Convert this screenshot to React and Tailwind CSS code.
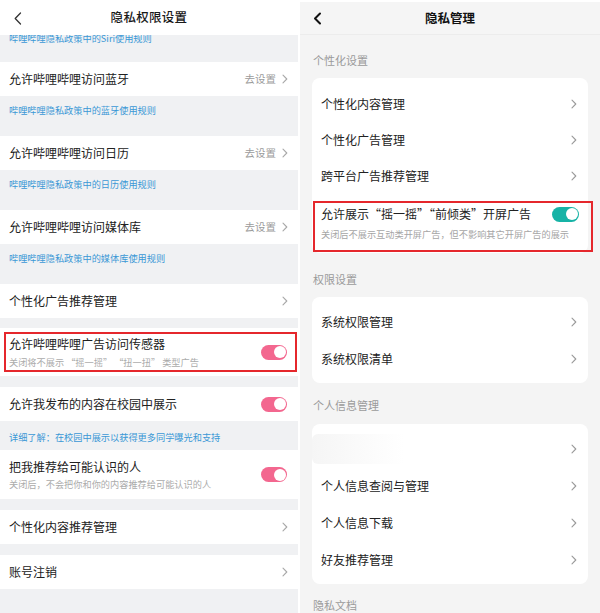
import React from "react";

const Chev = ({ cls = "text-[#a8a8a8]" }) => (
  <svg width="6" height="10" viewBox="0 0 6 10" className={cls}>
    <path d="M1 1.2L4.8 5L1 8.8" fill="none" stroke="currentColor" strokeWidth="1.1" strokeLinecap="round" strokeLinejoin="round" />
  </svg>
);

const PinkToggle = () => (
  <div className="w-[26px] h-[15px] rounded-full bg-[#f3678f] flex items-center justify-end pr-[1.5px] shrink-0">
    <div className="w-[12px] h-[12px] rounded-full bg-white" />
  </div>
);

const TealToggle = () => (
  <div className="w-[27px] h-[15px] rounded-full bg-[#17b3a6] flex items-center justify-end pr-[1.5px] shrink-0">
    <div className="w-[12px] h-[12px] rounded-full bg-white" />
  </div>
);

const LRow = ({ title, right }) => (
  <div className="h-[34px] shrink-0 bg-white flex items-center justify-between pl-[9px] pr-[10px]">
    <span className="text-[12px] leading-[14px] text-[#212121]">{title}</span>
    <div className="flex items-center gap-[6px]">
      {right && <span className="text-[10.5px] text-[#9b9b9b]">{right}</span>}
      <Chev />
    </div>
  </div>
);

const Blue = ({ children, h = "h-[40px]", pt = "pt-[8px]" }) => (
  <div className={`${h} ${pt} pl-[9px] shrink-0`}>
    <p className="text-[9.2px] leading-[12px] text-[#3a98d6]">{children}</p>
  </div>
);

const RRow = ({ title }) => (
  <div className="h-[36px] flex items-center justify-between pl-[9px] pr-[11px]">
    <span className="text-[12px] leading-[14px] text-[#222]">{title}</span>
    <Chev cls="text-[#9a9a9a]" />
  </div>
);

const RRow37 = ({ title, blur }) => (
  <div className="h-[37px] flex items-center justify-between pl-[9px] pr-[11px]">
    {blur ? (
      <div className="w-[92px] h-[30px] -ml-[9px] bg-gradient-to-r from-[#f1f1f1] to-white rounded-l-[6px] opacity-70" />
    ) : (
      <span className="text-[12px] leading-[14px] text-[#222]">{title}</span>
    )}
    <Chev cls="text-[#9a9a9a]" />
  </div>
);

const Label = ({ children, h, pt }) => (
  <div className={`${h} ${pt} pl-[13px] shrink-0`}>
    <p className="text-[11px] leading-[12px] text-[#9a9a9a]">{children}</p>
  </div>
);

export default function App() {
  return (
    <div className="w-[600px] h-[613px] bg-white flex overflow-hidden font-['Noto_Sans_CJK_SC',sans-serif]">
      {/* Left panel */}
      <div className="w-[298px] h-full bg-[#f0f1f3] flex flex-col">
        <div className="h-[35px] shrink-0 bg-white grid grid-cols-[40px_1fr_40px] items-center">
          <div className="pl-[14px] pt-[1px]">
            <svg width="8" height="13" viewBox="0 0 8 13">
              <path d="M6.5 1L1.2 6.5L6.5 12" fill="none" stroke="#333" strokeWidth="1.3" strokeLinecap="round" strokeLinejoin="round" />
            </svg>
          </div>
          <div className="text-center text-[12.5px] font-medium text-[#1a1a1a] tracking-[0.3px]">隐私权限设置</div>
          <div />
        </div>
        <div className="h-[27px] shrink-0 overflow-hidden pl-[9px]">
          <p className="mt-[-3px] text-[9.2px] leading-[12px] text-[#3a98d6]">哔哩哔哩隐私政策中的Siri使用规则</p>
        </div>
        <LRow title="允许哔哩哔哩访问蓝牙" right="去设置" />
        <Blue>哔哩哔哩隐私政策中的蓝牙使用规则</Blue>
        <LRow title="允许哔哩哔哩访问日历" right="去设置" />
        <Blue>哔哩哔哩隐私政策中的日历使用规则</Blue>
        <LRow title="允许哔哩哔哩访问媒体库" right="去设置" />
        <Blue>哔哩哔哩隐私政策中的媒体库使用规则</Blue>
        <LRow title="个性化广告推荐管理" />
        <div className="h-[10px] shrink-0" />
        <div className="h-[48px] shrink-0 bg-white pt-[4px] pl-[4px] pr-[1px]">
          <div className="h-[40px] border-2 border-[#e5272c] flex items-center justify-between pl-[3px] pr-[8px]">
            <div className="flex flex-col">
              <span className="text-[12px] leading-[14px] text-[#212121]">允许哔哩哔哩广告访问传感器</span>
              <span className="mt-[5px] text-[9.2px] leading-[12px] text-[#ababab]">关闭将不展示 “摇一摇” “扭一扭” 类型广告</span>
            </div>
            <PinkToggle />
          </div>
        </div>
        <div className="h-[11px] shrink-0" />
        <div className="h-[34px] shrink-0 bg-white flex items-center justify-between pl-[9px] pr-[11px]">
          <span className="text-[12px] leading-[14px] text-[#212121]">允许我发布的内容在校园中展示</span>
          <PinkToggle />
        </div>
        <Blue h="h-[29px]" pt="pt-[10px]">详细了解：在校园中展示以获得更多同学曝光和支持</Blue>
        <div className="h-[49px] shrink-0 bg-white flex items-center justify-between pl-[9px] pr-[11px]">
          <div className="flex flex-col pt-[1px]">
            <span className="text-[12px] leading-[14px] text-[#212121]">把我推荐给可能认识的人</span>
            <span className="mt-[4px] text-[9.2px] leading-[12px] text-[#ababab]">关闭后，不会把你和你的内容推荐给可能认识的人</span>
          </div>
          <PinkToggle />
        </div>
        <div className="h-[11px] shrink-0" />
        <LRow title="个性化内容推荐管理" />
        <div className="h-[11px] shrink-0" />
        <LRow title="账号注销" />
      </div>

      <div className="w-[2px] h-full bg-white" />

      {/* Right panel */}
      <div className="w-[300px] h-full bg-[#f4f4f4] flex flex-col">
        <div className="h-[2px] shrink-0 bg-white" />
        <div className="h-[33px] shrink-0 bg-[#f5f5f5] border-b border-[#ececec] grid grid-cols-[40px_1fr_40px] items-center">
          <div className="pl-[13px]">
            <svg width="9" height="13" viewBox="0 0 9 13">
              <path d="M7 1.5L2 6.5L7 11.5" fill="none" stroke="#111" strokeWidth="2" strokeLinecap="round" strokeLinejoin="round" />
            </svg>
          </div>
          <div className="text-center text-[12.5px] font-bold text-[#111]">隐私管理</div>
          <div />
        </div>
        <Label h="h-[43px]" pt="pt-[19px]">个性化设置</Label>
        <div className="mx-[12px] bg-white rounded-[8px] pt-[8px] pb-[1px] shrink-0">
          <RRow title="个性化内容管理" />
          <RRow title="个性化广告管理" />
          <RRow title="跨平台广告推荐管理" />
          <div className="mt-[7px] ml-[1px] mr-[-5px] h-[51px] border-2 border-[#e5272c] pl-[6px] pr-[12px] pt-[4px]">
            <div className="flex items-center justify-between h-[14px]">
              <span className="text-[12px] leading-[14px] text-[#222]">允许展示“摇一摇”“前倾类”开屏广告</span>
              <TealToggle />
            </div>
            <p className="mt-[7px] text-[9.2px] leading-[12px] text-[#a5a5a5]">关闭后不展示互动类开屏广告，但不影响其它开屏广告的展示</p>
          </div>
        </div>
        <Label h="h-[44px]" pt="pt-[20px]">权限设置</Label>
        <div className="mx-[12px] bg-white rounded-[8px] py-[6px] shrink-0">
          <RRow37 title="系统权限管理" />
          <RRow37 title="系统权限清单" />
        </div>
        <Label h="h-[41px]" pt="pt-[16px]">个人信息管理</Label>
        <div className="mx-[12px] bg-white rounded-[8px] py-[6px] shrink-0">
          <RRow37 blur />
          <RRow37 title="个人信息查阅与管理" />
          <RRow37 title="个人信息下载" />
          <RRow37 title="好友推荐管理" />
        </div>
        <Label h="h-[40px]" pt="pt-[15px]">隐私文档</Label>
      </div>
    </div>
  );
}
